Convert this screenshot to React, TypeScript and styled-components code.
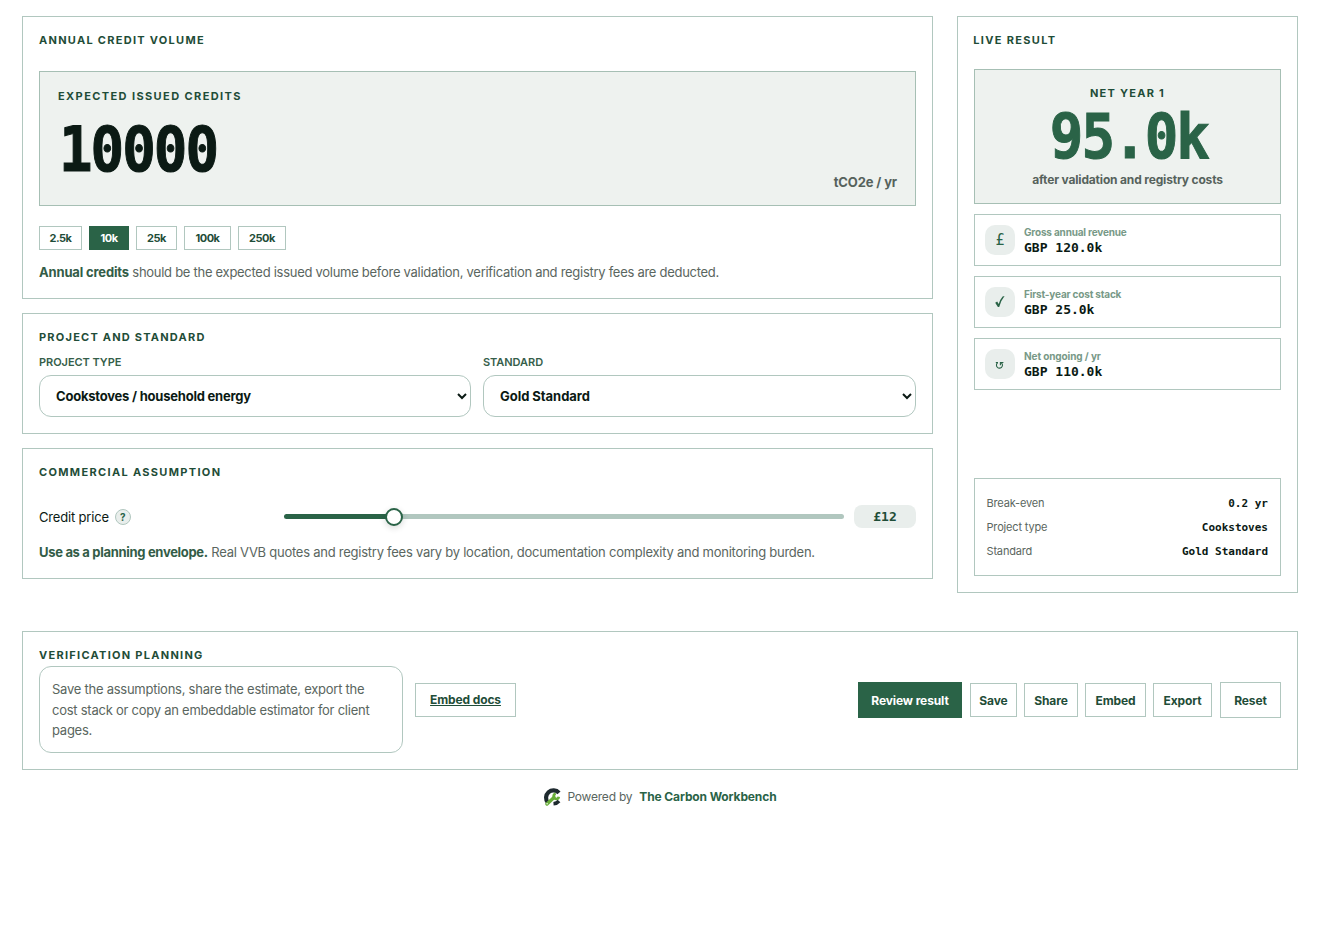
import React from "react";
import styled, { createGlobalStyle } from "styled-components";

const mono = `"DejaVu Sans Mono", "Liberation Mono", monospace`;
const line = "#b1c7bf";
const green = "#2a6347";
const deep = "#1f4d38";

const Global = createGlobalStyle`
  * { box-sizing: border-box; }
  body { margin: 0; background: #fff; color: #0b1a14; font-family: Inter, "Liberation Sans", sans-serif; }
  button, select { font-family: inherit; }
`;
const Page = styled.main`width: 1320px; min-height: 940px; padding: 16px 22px;`;
const Columns = styled.div`display: grid; grid-template-columns: 911px 341px; gap: 24px; align-items: start;`;
const Stack = styled.div`display: flex; flex-direction: column; gap: 14px;`;
const Card = styled.section<{ $h: number }>`
  height: ${p => p.$h}px; border: 1px solid ${line}; padding: 16px; display: flex; flex-direction: column;
`;
const Heading = styled.h2<{ $ls: number }>`
  margin: 0; height: 14px; line-height: 14px; font-size: 11px; font-weight: 700; color: ${deep};
  letter-spacing: ${p => p.$ls}px; white-space: nowrap;
`;
const ResultHeading = styled(Heading)`margin-left: -.7px;`;
const Hero = styled.div`
  margin-top: 24px; height: 135px; border: 1px solid #a6bfb4; background: #eef2ef; padding: 17px 18px;
  display: flex; flex-direction: column;
`;
const HeroRow = styled.div`display: flex; flex-shrink: 0; justify-content: space-between; align-items: flex-end; height: 79px; margin-top: 8px;`;
const Big = styled.span<{ $c: string }>`
  display: block; width: max-content; font: 700 62px/60px ${mono}; letter-spacing: -2.2px; color: ${p => p.$c};
  transform: scaleX(.9); transform-origin: 0 50%; -webkit-text-stroke: 1px ${p => p.$c};
`;
const HeroNumber = styled(Big)`align-self: flex-start; margin: 9px 0 0 1px;`;
const Unit = styled.span`font-size: 13px; line-height: 16px; font-weight: 700; color: #56625c; letter-spacing: -.13px;`;
const Chips = styled.div`display: flex; gap: 7px; margin-top: 20px;`;
const Chip = styled.button<{ $w: number; $on?: boolean }>`
  width: ${p => p.$w}px; height: 24px; padding: 0; border: 1px solid ${p => (p.$on ? green : line)};
  background: ${p => (p.$on ? green : "#fff")}; color: ${p => (p.$on ? "#fff" : deep)};
  font-size: 11px; font-weight: 700; letter-spacing: -.5px;
`;
const Note = styled.p<{ $mt: number; $ls: number; $bls: number }>`
  margin: ${p => p.$mt}px 0 0; font-size: 13px; line-height: 20px; color: #5a6660; letter-spacing: ${p => p.$ls}px; white-space: nowrap;
  b { color: #335c47; font-weight: 700; letter-spacing: ${p => p.$bls}px; }
`;
const Fields = styled.div`display: grid; grid-template-columns: 432px 433px; gap: 12px; margin-top: 11px;`;
const Field = styled.label`
  display: flex; flex-direction: column; gap: 6px; font-size: 11px; line-height: 14px; font-weight: 600; color: #365e4a; letter-spacing: -.05px;
`;
const Select = styled.select<{ $ls: number }>`
  width: 100%; height: 42px; padding: 0 12px; border: 1px solid ${line}; border-radius: 12px; background: #fff;
  color: #0b1a14; font-size: 13px; font-weight: 700; letter-spacing: ${p => p.$ls}px;
`;
const SliderRow = styled.div`display: flex; align-items: center; height: 23px; margin-top: 26px;`;
const SliderLabel = styled.span`width: 245px; display: flex; align-items: center; gap: 6px; font-size: 13px; letter-spacing: -.18px;`;
const Help = styled.span`
  width: 16px; height: 16px; border: 1px solid ${line}; border-radius: 50%; background: #e9eeec; color: ${green};
  font-size: 10px; font-weight: 700; line-height: 14px; text-align: center;
`;
const Track = styled.div`
  position: relative; width: 560px; height: 5px; border-radius: 3px; background: linear-gradient(90deg, ${green} 110px, ${line} 110px);
`;
const Thumb = styled.i`
  position: absolute; left: 101px; top: -6px; width: 18px; height: 18px; border: 2px solid ${green}; border-radius: 50%;
  background: #fff; box-shadow: 0 2px 6px rgba(11, 26, 20, .16);
`;
const Value = styled.span`
  width: 62px; height: 23px; margin-left: 10px; border-radius: 8px; background: #e9eeec; color: ${deep};
  font: 700 13px/23px ${mono}; text-align: center;
`;
const Result = styled(Hero)`margin-top: 22px; align-items: center; padding: 16px 0;`;
const ResultNumber = styled(Big)`transform-origin: 50% 50%; margin: 7px 0 0 2px;`;
const ResultNote = styled.span`margin-top: 5px; font-size: 12px; line-height: 16px; font-weight: 700; color: #56625c; letter-spacing: -.17px;`;
const Metric = styled.div`
  height: 52px; margin-top: 10px; padding: 0 10px; border: 1px solid ${line}; display: flex; align-items: center; gap: 9px;
`;
const Icon = styled.span`
  width: 30px; height: 30px; border-radius: 10px; background: #e9eeec; color: ${green}; display: grid; place-items: center;
  svg { display: block; }
`;
const Pound = styled.span`font: 400 15px/18px ${mono};`;
const MetricText = styled.div`display: flex; flex-direction: column;`;
const MetricName = styled.span<{ $ls: number }>`font-size: 10px; line-height: 14px; font-weight: 700; color: #789987; letter-spacing: ${p => p.$ls}px;`;
const MetricValue = styled.strong`margin-bottom: -2px; font: 700 13px/18px ${mono};`;
const Summary = styled.dl`
  margin: auto 0 0; height: 98px; padding: 12px 12px 12px 11.5px; border: 1px solid ${line};
`;
const SummaryRow = styled.div`
  height: 24px; display: flex; align-items: center; justify-content: space-between;
  dt { font-size: 11px; color: #5a6660; letter-spacing: -.17px; }
  dd { margin: 2px 0 0; font: 700 11px/14px ${mono}; }
`;
const Planning = styled(Card)`margin-top: 38px;`;
const PlanRow = styled.div`display: flex; align-items: flex-start; margin-top: 4px;`;
const Message = styled.p`
  margin: 0; width: 364px; height: 87px; padding: 12px; border: 1px solid ${line}; border-radius: 12px;
  font-size: 13px; line-height: 20.5px; color: #5a6660; letter-spacing: -.25px; white-space: nowrap;
`;
const Action = styled.button<{ $w: number; $h?: number; $ml: number; $primary?: boolean; $u?: boolean }>`
  width: ${p => p.$w}px; height: ${p => p.$h ?? 34}px; margin: ${p => (p.$h ? 16 : 17)}px 0 0 ${p => p.$ml}px; padding: 0;
  border: 1px solid ${p => (p.$primary ? green : line)}; background: ${p => (p.$primary ? green : "#fff")};
  color: ${p => (p.$primary ? "#fff" : deep)}; font-size: 12px; font-weight: 700; letter-spacing: -.12px;
  text-decoration: ${p => (p.$u ? "underline" : "none")}; padding-bottom: ${p => (p.$u ? 2 : 0)}px;
`;
const Actions = styled.div`display: flex; margin-left: auto;`;
const Footer = styled.footer`
  display: flex; justify-content: center; align-items: center; margin-top: 17px; height: 20px;
  font-size: 12px; line-height: 18px; color: #5a6660; letter-spacing: -.22px;
  svg { margin-right: 6px; }
  b { color: ${green}; margin-left: 7px; letter-spacing: -.12px; }
`;

const metrics = [
  { icon: "pound", name: "Gross annual revenue", value: "GBP 120.0k", ls: -0.18 },
  { icon: "check", name: "First-year cost stack", value: "GBP 25.0k", ls: -0.18 },
  { icon: "cycle", name: "Net ongoing / yr", value: "GBP 110.0k", ls: -0.1 },
];

function Glyph({ kind }: { kind: string }) {
  if (kind === "pound") return <Pound>£</Pound>;
  if (kind === "check")
    return (
      <svg width="12" height="14" viewBox="0 0 12 14">
        <path d="M1.2 7.7 3.2 6.5 4.7 9Q6.3 3.8 8.6 1.4L10.6 1Q6.9 5.4 5.2 12H3.9Z" fill={green} />
      </svg>
    );
  return (
    <svg width="12" height="14" viewBox="0 0 12 14" fill="none" stroke={green} strokeWidth="1.1">
      <path d="M1.8 5.5H4M3.6 5.8A3 3 0 1 0 7.8 6.3L7 5.6" />
      <path d="M6.4 8.3V5.5H9.4" />
    </svg>
  );
}

function Logo() {
  return (
    <svg width="18" height="18" viewBox="0 0 18 18" fill="none">
      <path d="M16 4.8A7 7 0 1 0 5 14.8" stroke="#1e2a2f" strokeWidth="4.2" />
      <path d="M10.5 15.7Q14 15.4 16 13" stroke="#1e2a2f" strokeWidth="3.6" />
      <path d="M4 16 11 9.4" stroke="#68ad38" strokeWidth="3.4" strokeLinecap="round" />
      <path d="M12.8 5.8A2.6 2.6 0 1 0 15.8 8.8" stroke="#68ad38" strokeWidth="2.6" />
      <circle cx="4.1" cy="15.8" r=".7" fill="#fff" />
    </svg>
  );
}

export default function App() {
  return (
    <Page>
      <Global />
      <Columns>
        <Stack>
          <Card $h={283}>
            <Heading $ls={1.28}>ANNUAL CREDIT VOLUME</Heading>
            <Hero>
              <Heading as="h3" $ls={1.4}>EXPECTED ISSUED CREDITS</Heading>
              <HeroRow>
                <HeroNumber $c="#0b1a14">10000</HeroNumber>
                <Unit>tCO2e / yr</Unit>
              </HeroRow>
            </Hero>
            <Chips>
              <Chip $w={43}>2.5k</Chip>
              <Chip $w={40} $on>10k</Chip>
              <Chip $w={41}>25k</Chip>
              <Chip $w={47}>100k</Chip>
              <Chip $w={48}>250k</Chip>
            </Chips>
            <Note $mt={12} $ls={-0.28} $bls={-0.16}>
              <b>Annual credits</b> should be the expected issued volume before validation, verification and registry fees are deducted.
            </Note>
          </Card>
          <Card $h={121}>
            <Heading $ls={1.22}>PROJECT AND STANDARD</Heading>
            <Fields>
              <Field>PROJECT TYPE<Select $ls={-0.22}><option>Cookstoves / household energy</option></Select></Field>
              <Field>STANDARD<Select $ls={-0.04}><option>Gold Standard</option></Select></Field>
            </Fields>
          </Card>
          <Card $h={131}>
            <Heading $ls={1.33}>COMMERCIAL ASSUMPTION</Heading>
            <SliderRow>
              <SliderLabel>Credit price <Help>?</Help></SliderLabel>
              <Track><Thumb /></Track>
              <Value>£12</Value>
            </SliderRow>
            <Note $mt={14} $ls={-0.25} $bls={-0.31}>
              <b>Use as a planning envelope.</b> Real VVB quotes and registry fees vary by location, documentation complexity and monitoring burden.
            </Note>
          </Card>
        </Stack>
        <Card as="aside" $h={577}>
          <ResultHeading $ls={1.32}>LIVE RESULT</ResultHeading>
          <Result>
            <Heading as="h3" $ls={1.25}>NET YEAR 1</Heading>
            <ResultNumber $c={green}>95.0k</ResultNumber>
            <ResultNote>after validation and registry costs</ResultNote>
          </Result>
          {metrics.map(m => (
            <Metric key={m.name}>
              <Icon><Glyph kind={m.icon} /></Icon>
              <MetricText>
                <MetricName $ls={m.ls}>{m.name}</MetricName>
                <MetricValue>{m.value}</MetricValue>
              </MetricText>
            </Metric>
          ))}
          <Summary>
            <SummaryRow><dt>Break-even</dt><dd>0.2 yr</dd></SummaryRow>
            <SummaryRow><dt>Project type</dt><dd>Cookstoves</dd></SummaryRow>
            <SummaryRow><dt>Standard</dt><dd>Gold Standard</dd></SummaryRow>
          </Summary>
        </Card>
      </Columns>
      <Planning $h={139}>
        <Heading $ls={1.28}>VERIFICATION PLANNING</Heading>
        <PlanRow>
          <Message>
            Save the assumptions, share the estimate, export the<br />
            cost stack or copy an embeddable estimator for client<br />
            pages.
          </Message>
          <Action $w={101} $ml={12} $u>Embed docs</Action>
          <Actions>
            <Action $w={104} $h={36} $ml={0} $primary>Review result</Action>
            <Action $w={47} $ml={8}>Save</Action>
            <Action $w={54} $ml={7}>Share</Action>
            <Action $w={61} $ml={7}>Embed</Action>
            <Action $w={59} $ml={7}>Export</Action>
            <Action $w={61} $h={36} $ml={8}>Reset</Action>
          </Actions>
        </PlanRow>
      </Planning>
      <Footer>
        <Logo />
        <span>Powered by</span> <b>The Carbon Workbench</b>
      </Footer>
    </Page>
  );
}
